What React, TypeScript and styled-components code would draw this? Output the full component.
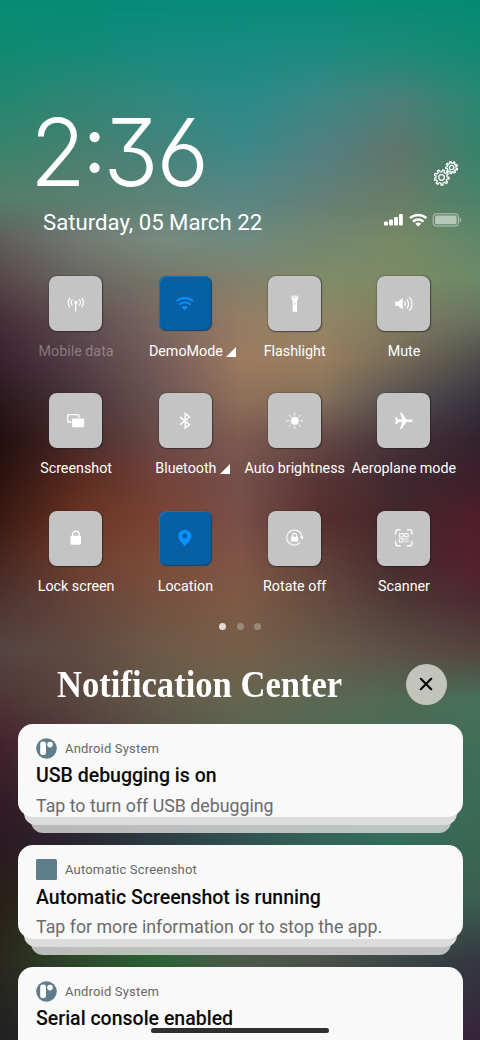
import React from "react";
import styled, { createGlobalStyle } from "styled-components";

const GlobalStyle = createGlobalStyle`
  * { box-sizing: border-box; }
  body { margin: 0; background: #222; font-family: Roboto, "Noto Sans", sans-serif; }
`;

/* ---------- wallpaper ---------- */

// Colour mesh: each entry is a height and the colours across the screen at that height.
const mesh: [number, string][] = [
  [0, "#078c76 #068b76 #078b78 #098b79 #088b78 #078b76 #058a74"],
  [50, "#118a72 #138a79 #178b7f #188b83 #1c8b80 #1c8a79 #128a73"],
  [100, "#23876f #318574 #318880 #2a8a88 #3c8785 #4b7f78 #2b8872"],
  [150, "#3a846c #478070 #46837b #3d8889 #528082 #60756b #37836c"],
  [200, "#567d6a #5a7f71 #5e8378 #5a8682 #647f77 #687d68 #4a836b"],
  [240, "#605e5b #737a72 #788a7e #6f8a80 #74876f #788a66 #60876a"],
  [280, "#57474a #696662 #77756a #83806c #808b68 #7c8a65 #6c8a67"],
  [320, "#482e38 #5f4c50 #7b6863 #957c64 #928666 #817c5f #687060"],
  [360, "#3b2230 #563f48 #755c5a #9c7a60 #9a7e60 #756a58 #4f4d4c"],
  [400, "#2c181d #49343a #6c5352 #8e6f5a #84705a #565050 #373340"],
  [440, "#230e10 #4a2b2b #6a4a48 #7d5a50 #664a48 #453239 #33222d"],
  [480, "#2c1410 #5c2c20 #73423a #74504a #583536 #40282f #3d1f2a"],
  [520, "#3a1a12 #6c3524 #7b4334 #785048 #562f2e #44262c #501e2b"],
  [560, "#482720 #703f2e #7c4c3a #7f5546 #60403a #47292e #551f2d"],
  [600, "#4d3432 #66453a #75513f #7e5a46 #664c40 #4f3837 #4c2a33"],
  [650, "#574443 #5f4a41 #6e5a48 #775f4a #685a4a #5c4f47 #54443f"],
  [700, "#4e3535 #5a4640 #635a4a #65664f #5c6853 #506a54 #47705b"],
  [740, "#46242f #503a3c #555249 #566250 #4e6a55 #486c57 #426e5a"],
  [800, "#341b25 #38303a #3a4648 #3e5852 #3c6858 #386b5a #3c6b59"],
  [840, "#2c1923 #2b2732 #2c3d42 #31504f #336458 #346d5c #3b6653"],
  [900, "#282019 #2c3826 #2c5238 #3f5850 #405c52 #3c5c52 #3c6052"],
  [960, "#2b2820 #2d4a2a #2c6335 #4d5b4b #4c5249 #3b4747 #34373f"],
  [1040, "#202122 #25302a #2a4030 #3a4040 #383c40 #35303c #37233a"],
];

const Wallpaper = styled.div`
  grid-area: 1 / 1;
  display: grid;
  height: 1040px;
  width: 480px;
`;

const Band = styled.div<{ $from: number; $to: number; $stops: string }>`
  grid-area: 1 / 1;
  background: linear-gradient(90deg, ${(p) => p.$stops});
  mask-image: linear-gradient(
    180deg,
    transparent ${(p) => p.$from}px,
    #000 ${(p) => p.$to}px
  );
`;

const Screen = styled.main`
  display: grid;
  width: 480px;
  height: 1040px;
  overflow: hidden;
  position: relative;
`;

const Content = styled.div`
  grid-area: 1 / 1;
  z-index: 1;
  min-width: 0;
  height: 1040px;
  display: flex;
  flex-direction: column;
`;

/* ---------- header ---------- */

const Header = styled.header`
  flex: none;
  display: flex;
  justify-content: space-between;
  height: 276px;
  padding: 102px 18px 0 33px;
  color: #fff;
`;

const Clock = styled.div`
  width: 200px;
  font: 350 94px/100px Inter, sans-serif;
  font-feature-settings: "cv03", "cv09";
  letter-spacing: -2.3px;
  white-space: nowrap;
  transform: scaleX(0.97);
  transform-origin: 0 50%;
  margin-left: -3px;
`;

const Colon = styled.span`
  font-size: 78px;
  font-weight: 400;
  line-height: 0;
  vertical-align: 13px;
`;

const DateText = styled.div`
  padding: 7px 0 0 10px;
  font-size: 22.2px;
  line-height: 27px;
  white-space: nowrap;
`;

const StatusColumn = styled.div`
  display: flex;
  flex-direction: column;
  align-items: flex-end;
  padding-top: 58px;
`;

const GearIcon = styled.svg`
  width: 28px;
  height: 28px;
  display: block;
`;

const StatusIcons = styled.svg`
  width: 80px;
  height: 18px;
  margin-top: 22.5px;
  display: block;
`;

/* ---------- toggles ---------- */

const Toggles = styled.section`
  flex: none;
  display: grid;
  grid-template-columns: repeat(4, 109.3px);
  grid-auto-rows: 117.4px;
  margin-left: 21.2px;
`;

const Toggle = styled.div`
  display: flex;
  flex-direction: column;
  align-items: center;
`;

const Tile = styled.div<{ $on?: boolean }>`
  width: 53px;
  height: 55px;
  border-radius: 8px;
  display: grid;
  place-items: center;
  color: ${(p) => (p.$on ? "#0a90ff" : "#fff")};
  background: ${(p) => (p.$on ? "#075fa4" : "#c4c4c4")};
  box-shadow: ${(p) =>
    p.$on
      ? "inset 1px 1px 1px #1976bd, inset -1px -1px 1px #26455f, 0 0 1px #333a"
      : "0 0 2px rgba(40,40,40,.6), 0.5px 0.5px 1px rgba(30,30,30,.5)"};
  svg { width: 17.600px; height: 17.600px; display: block; }
`;

const Label = styled.div<{ $dim?: boolean }>`
  display: flex;
  align-items: center;
  margin: 12px 0 0 0.5px;
  font-size: 14.3px;
  line-height: 17px;
  white-space: nowrap;
  color: ${(p) => (p.$dim ? "rgba(255,255,255,.33)" : "#fff")};
`;

const Corner = styled.svg`
  width: 10px;
  height: 10px;
  margin: 0 -14px 0 3px;
`;

const Pager = styled.div`
  flex: none;
  display: flex;
  justify-content: center;
  gap: 10.7px;
  margin-top: -5px;
  height: 7px;
`;

const Dot = styled.i<{ $active?: boolean }>`
  width: 7px;
  height: 7px;
  border-radius: 50%;
  background: ${(p) => (p.$active ? "rgba(255,255,255,.78)" : "rgba(255,255,255,.27)")};
`;

/* ---------- notifications ---------- */

const CenterHeader = styled.div`
  flex: none;
  display: flex;
  align-items: center;
  justify-content: space-between;
  height: 42px;
  margin: 33px 33.5px 18.6px 57px;
`;

const CenterTitle = styled.h1`
  margin: 0;
  width: 300px;
  font: 700 38px/42px "Liberation Serif", serif;
  color: #fff;
  white-space: nowrap;
  transform: scaleX(0.91);
  transform-origin: 0 50%;
`;

const CloseButton = styled.button`
  width: 41px;
  height: 41px;
  padding: 0;
  border: 0;
  border-radius: 50%;
  background: #c3c3bd;
  display: grid;
  place-items: center;
`;

const Stack = styled.article`
  flex: none;
  height: 121.4px;
  margin: 0 17px 0 18px;
  display: flex;
  flex-direction: column;
  align-items: center;
`;

const Card = styled.div`
  flex: none;
  z-index: 2;
  width: 100%;
  height: 93.5px;
  padding: 14px 18px 0;
  border-radius: 15px;
  background: #f9f9f9;
`;

const Under = styled.div<{ $deep?: boolean }>`
  z-index: ${(p) => (p.$deep ? 0 : 1)};
  flex: none;
  width: ${(p) => (p.$deep ? 420 : 433)}px;
  height: 24px;
  margin-top: -16px;
  border-radius: 0 0 12px 12px;
  background: ${(p) => (p.$deep ? "rgba(219,217,218,.82)" : "#dcdcdc")};
`;

const AppRow = styled.div`
  display: flex;
  align-items: center;
  gap: 8px;
  height: 21px;
  font-size: 13px;
  letter-spacing: 0.18px;
  color: #676767;
  svg { width: 21px; height: 21px; }
`;

const CardTitle = styled.h2`
  margin: 4.6px 0 0;
  font-size: 19.5px;
  line-height: 26px;
  font-weight: 500;
  color: #0a0a0a;
  white-space: nowrap;
`;

const CardText = styled.p`
  margin: 4.2px 0 0;
  font-size: 17.8px;
  line-height: 23px;
  color: #6b6b6b;
  white-space: nowrap;
`;

const HomeBar = styled.div`
  position: absolute;
  z-index: 3;
  left: 151px;
  top: 1028px;
  width: 178px;
  height: 4.5px;
  border-radius: 3px;
  background: #303030;
`;

/* ---------- drawings ---------- */

const gear = (cx: number, cy: number, outer: number, inner: number, teeth: number, turn = 0) => {
  const step = (Math.PI * 2) / teeth;
  const at = (r: number, a: number) =>
    `${(cx + r * Math.cos(a)).toFixed(2)} ${(cy + r * Math.sin(a)).toFixed(2)}`;
  let d = "";
  for (let i = 0; i < teeth; i++) {
    const a = i * step + turn;
    d += `${i ? "L" : "M"}${at(inner, a - step * 0.27)}L${at(outer, a - step * 0.18)}L${at(outer, a + step * 0.18)}L${at(inner, a + step * 0.27)}`;
  }
  return d + "Z";
};

const line = { fill: "none", stroke: "currentColor", strokeLinecap: "round" as const };

const icons: Record<string, React.ReactNode> = {
  data: (
    <g {...line} strokeWidth="1.4" strokeLinecap="butt">
      <circle cx="10" cy="8.6" r="2" fill="currentColor" stroke="none" />
      <path d="M10 9v9.8M6.4 5.2a4.3 4.3 0 0 0 0 6.8M13.6 5.2a4.3 4.3 0 0 1 0 6.8M3.400 3.200a8 8 0 0 0 0 10.800M16.600 3.200a8 8 0 0 1 0 10.800" />
    </g>
  ),
  wifi: (
    <g {...line} strokeWidth="2.100" strokeLinecap="butt">
      <path d="M.6 7a14 14 0 0 1 18.800 0M3.600 10.900a9.500 9.500 0 0 1 12.800 0" />
      <path d="M6.400 13.900a5 5 0 0 1 7.200 0L10 17.200Z" fill="currentColor" stroke="none" />
    </g>
  ),
  torch: (
    <path
      fill="currentColor"
      fillRule="evenodd"
      d="M5.800 .8h8.400v1.200H5.800ZM5.800 2.900h8.400L12.500 7v11.500a.6.6 0 0 1-.6.6H8.100a.6.6 0 0 1-.6-.6V7ZM9.400 8.800v2.400h1.200V8.800Z"
    />
  ),
  sound: (
    <g {...line} strokeWidth="1.300">
      <path d="M.2 7.600h3L8.800 3.600v12.800L3.200 12.300H.2Z" fill="currentColor" stroke="none" />
      <path d="M11.200 8a3.500 3.500 0 0 1 0 4.200M13.600 5.400a7 7 0 0 1 0 9.400M16.600 2.600a11 11 0 0 1 0 15" />
    </g>
  ),
  shot: (
    <g {...line} strokeWidth="1.500">
      <path d="M4.500 11.400H1.900a1 1 0 0 1-1-1V4a1 1 0 0 1 1-1h10.600a1 1 0 0 1 1 1v2" />
      <rect x="5.800" y="7.400" width="13.700" height="10" rx="1.200" fill="currentColor" stroke="none" />
    </g>
  ),
  bluetooth: (
    <path {...line} strokeWidth="1.600" strokeLinecap="butt" d="M4.500 5.500l10.800 8.900-4.800 3.900V1.700l4.800 3.900L4.500 14.500" />
  ),
  sun: (
    <g {...line} strokeWidth="1">
      <circle cx="10" cy="10" r="4.500" fill="currentColor" stroke="none" />
      <path d="M10 1.200v2.200M10 16.600v2.200M.8 10h2.400M16.800 10h2.400M3.700 3.700l1.500 1.500M14.800 14.800l1.500 1.500M3.700 16.300l1.500-1.500M14.800 5.200l1.500-1.500" />
    </g>
  ),
  plane: (
    <path
      fill="currentColor"
      d="M20 10c0 .9-.8 1.400-1.700 1.400h-5.300L7.500 19.400H5.700l2.600-7.900H4.100L1.700 14H0L1.100 10 0 6h1.700l2.400 2.500h4.200L5.700.6h1.800l5.500 8h5.300c.9 0 1.700.5 1.700 1.400Z"
    />
  ),
  lock: (
    <>
      <rect x="4" y="7.800" width="12" height="10" rx="1.500" fill="currentColor" />
      <path {...line} strokeWidth="1.600" d="M6.300 8.500V6.200a3.700 3.700 0 0 1 7.400 0v2.300" />
    </>
  ),
  pin: (
    <path
      fill="currentColor"
      fillRule="evenodd"
      d="M10 .8a7.400 7.400 0 0 0-7.400 7.400c0 4.100 4.200 7.900 7.400 11.100 3.200-3.200 7.400-7 7.400-11.100A7.400 7.400 0 0 0 10 .8ZM10 5.200a2.800 2.800 0 1 1 0 5.600 2.800 2.800 0 0 1 0-5.600Z"
    />
  ),
  rotate: (
    <g {...line} strokeWidth="1.200">
      <path d="M15.600 3.600A8.700 8.700 0 1 0 15.600 15.900M15.600 3.600a8.700 8.700 0 0 1 2.600 5.600" />
      <path d="M15.900 8.400h4.900L18.400 12Z" fill="currentColor" stroke="none" />
      <rect x="5.600" y="8.700" width="8.200" height="5.600" rx=".5" fill="currentColor" stroke="none" />
      <path d="M7.400 9V7.300a2.300 2.300 0 0 1 4.600 0V9" />
    </g>
  ),
  scan: (
    <g {...line} strokeWidth="1.600">
      <path d="M.8 5.700V3a2 2 0 0 1 2-2h3.200M14 1h3.200a2 2 0 0 1 2 2v2.700M.8 14.300V17a2 2 0 0 0 2 2h3.200M14 19h3.200a2 2 0 0 0 2-2v-2.700" />
      <g strokeWidth="1.100">
        <rect x="5.200" y="5.300" width="3.900" height="3.700" />
        <rect x="11" y="5.300" width="3.900" height="3.700" />
        <rect x="5.200" y="11.100" width="3.900" height="3.700" />
        <path strokeDasharray="1.200 1.200" strokeLinecap="butt" d="M10.600 11h4.800M11.800 12.300h4M10.600 13.600h4.800M11.800 14.900h4" />
      </g>
    </g>
  ),
};

const toggles: { icon: string; label: string; on?: boolean; dim?: boolean; corner?: boolean }[] = [
  { icon: "data", label: "Mobile data", dim: true },
  { icon: "wifi", label: "DemoMode", on: true, corner: true },
  { icon: "torch", label: "Flashlight" },
  { icon: "sound", label: "Mute" },
  { icon: "shot", label: "Screenshot" },
  { icon: "bluetooth", label: "Bluetooth", corner: true },
  { icon: "sun", label: "Auto brightness" },
  { icon: "plane", label: "Aeroplane mode" },
  { icon: "lock", label: "Lock screen" },
  { icon: "pin", label: "Location", on: true },
  { icon: "rotate", label: "Rotate off" },
  { icon: "scan", label: "Scanner" },
];

const notifications = [
  { app: "Android System", title: "USB debugging is on", text: "Tap to turn off USB debugging" },
  {
    app: "Automatic Screenshot",
    title: "Automatic Screenshot is running",
    text: "Tap for more information or to stop the app.",
    square: true,
  },
  { app: "Android System", title: "Serial console enabled", text: "" },
];

const AppIcon = ({ square }: { square?: boolean }) => (
  <svg viewBox="0 0 21 21">
    {square ? (
      <rect width="21" height="21" rx="1.500" fill="#5f7d8a" />
    ) : (
      <>
        <circle cx="10.500" cy="10.500" r="10.300" fill="#5f7d8a" />
        <rect x="4.200" y="3.600" width="5.800" height="13.400" rx="2.500" fill="#fff" />
        <circle cx="14" cy="6.600" r="2.800" fill="#fff" />
      </>
    )}
  </svg>
);

export default function App() {
  return (
    <Screen>
      <GlobalStyle />
      <Wallpaper>
        {mesh.map(([y, colours], i) => (
          <Band
            key={y}
            $from={i ? mesh[i - 1][0] : -1}
            $to={y}
            $stops={colours.split(" ").join(", ")}
          />
        ))}
      </Wallpaper>
      <Content>
        <Header>
          <div>
            <Clock>
              2<Colon>:</Colon>36
            </Clock>
            <DateText>Saturday, 05 March 22</DateText>
          </div>
          <StatusColumn>
            <GearIcon viewBox="0 0 28 28" fill="none" stroke="#fff" strokeWidth="1.300" strokeLinejoin="round">
              <path d={gear(7.500, 17.500, 7.700, 5.700, 9, 0.100)} />
              <circle cx="7.500" cy="17.500" r="2.800" />
              <path d={gear(17.600, 7.500, 6, 4.400, 9, 0.300)} />
              <circle cx="17.600" cy="7.500" r="2.200" />
            </GearIcon>
            <StatusIcons viewBox="0 0 80 18" fill="#fff">
              <rect x="2" y="10.600" width="4" height="4" rx="1" />
              <rect x="7" y="8.600" width="4" height="6" rx="1" />
              <rect x="12" y="6" width="4" height="8.600" rx="1" />
              <rect x="17" y="3" width="3.800" height="11.600" rx="1" />
              <g fill="none" stroke="#fff" strokeWidth="2.500">
                <path d="M28 7.200a12 12 0 0 1 16.400 0M31 10.600a7.600 7.600 0 0 1 10.400 0" />
              </g>
              <path d="M33.200 12.800a4 4 0 0 1 6 0L36.200 15.600Z" />
              <g opacity=".55">
                <rect x="51.200" y="2.800" width="25.200" height="12.200" rx="3" fill="none" stroke="#fff" />
                <rect x="53" y="4.600" width="21.600" height="8.600" rx="1.500" />
                <path d="M77.800 6.800a2.500 2.500 0 0 1 0 4.400Z" />
              </g>
            </StatusIcons>
          </StatusColumn>
        </Header>
        <Toggles>
          {toggles.map((t) => (
            <Toggle key={t.label}>
              <Tile $on={t.on}>
                <svg viewBox="0 0 20 20">{icons[t.icon]}</svg>
              </Tile>
              <Label $dim={t.dim}>
                {t.label}
                {t.corner && (
                  <Corner viewBox="0 0 10 10">
                    <path d="M0 10L10 0V10Z" fill="#fff" />
                  </Corner>
                )}
              </Label>
            </Toggle>
          ))}
        </Toggles>
        <Pager>
          <Dot $active />
          <Dot />
          <Dot />
        </Pager>
        <CenterHeader>
          <CenterTitle>Notification Center</CenterTitle>
          <CloseButton aria-label="Close">
            <svg width="14" height="14" viewBox="0 0 14 14">
              <path d="M1.800 1.800l10.400 10.400M12.200 1.800L1.800 12.200" stroke="#080808" strokeWidth="2.200" strokeLinecap="round" />
            </svg>
          </CloseButton>
        </CenterHeader>
        {notifications.map((n) => (
          <Stack key={n.title}>
            <Card>
              <AppRow>
                <AppIcon square={n.square} />
                {n.app}
              </AppRow>
              <CardTitle>{n.title}</CardTitle>
              {n.text && <CardText>{n.text}</CardText>}
            </Card>
            <Under />
            <Under $deep />
          </Stack>
        ))}
      </Content>
      <HomeBar />
    </Screen>
  );
}
